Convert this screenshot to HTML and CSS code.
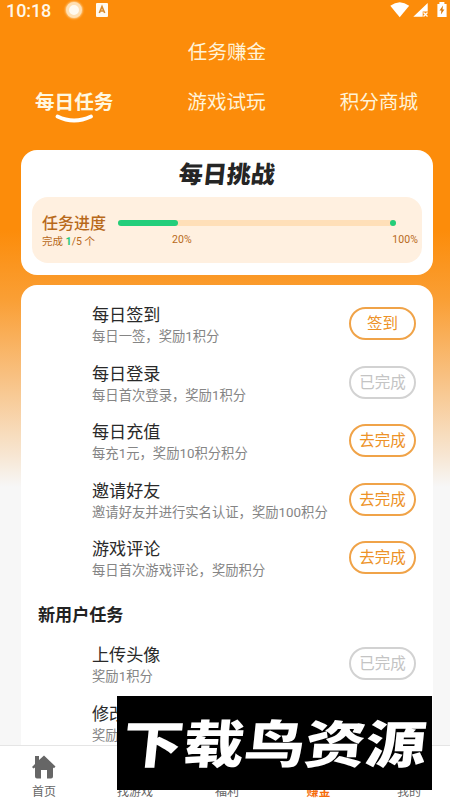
FILE: index.html
```html
<!DOCTYPE html>
<html lang="zh-CN">
<head>
<meta charset="utf-8">
<title>任务赚金</title>
<link rel="stylesheet" href="styles.css">
</head>
<body>
<div class="app">
  <header class="status">
    <span class="clock">10:18</span>
    <span class="rec"></span>
    <svg class="ime" width="12" height="14" viewBox="0 0 12 14"><rect width="12" height="14" rx="1" fill="#fffaf0"/><path d="M3.3 10 6 3.6 8.7 10M4.2 8h3.6" fill="none" stroke="#d98a2b" stroke-width="1.6"/></svg>
    <svg class="signals" width="58" height="18" viewBox="0 0 58 18">
      <path d="M.3 4.8Q9.7-2.2 19.2 4.8L9.7 16.3Z" fill="#fff"/>
      <path d="M37.7 2v8.5h-5v5.3h-9.4Z" fill="#fff"/>
      <path d="m33.5 11.5 4 4m0-4-4 4" stroke="#fff" stroke-width="1.3"/>
      <path d="M47.4 3h2V1h5v2h2.2v13h-9.2Z" fill="#fff"/>
      <path d="m53 4.4-3.5 5h1.9l-.5 4 3.5-5h-1.9Z" fill="#d9790c"/>
    </svg>
  </header>
  <h1 class="page-title">任务赚金</h1>
  <nav class="tabs">
    <span class="tab active">每日任务<svg class="smile" width="40" height="10" viewBox="0 0 40 10"><path d="M2.5 2.5Q19 10.5 36 2.5" fill="none" stroke="#fff" stroke-width="3.8" stroke-linecap="round"/></svg></span>
    <span class="tab">游戏试玩</span>
    <span class="tab">积分商城</span>
  </nav>
  <section class="card challenge">
    <h2>每日挑战</h2>
    <div class="progress">
      <div class="summary"><strong>任务进度</strong><span>完成 <b>1</b>/5 个</span></div>
      <div class="meter">
        <div class="track"><i class="fill"></i><i class="end"></i></div>
        <div class="marks"><span>20%</span><span>100%</span></div>
      </div>
    </div>
  </section>
  <section class="card tasks">
    <div class="task"><div><h3>每日签到</h3><p>每日一签，奖励1积分</p></div><button>签到</button></div>
    <div class="task"><div><h3>每日登录</h3><p>每日首次登录，奖励1积分</p></div><button class="done">已完成</button></div>
    <div class="task"><div><h3>每日充值</h3><p>每充1元，奖励10积分积分</p></div><button>去完成</button></div>
    <div class="task"><div><h3>邀请好友</h3><p>邀请好友并进行实名认证，奖励100积分</p></div><button>去完成</button></div>
    <div class="task"><div><h3>游戏评论</h3><p>每日首次游戏评论，奖励积分</p></div><button>去完成</button></div>
    <h4>新用户任务</h4>
    <div class="task"><div><h3>上传头像</h3><p>奖励1积分</p></div><button class="done">已完成</button></div>
    <div class="task"><div><h3>修改昵称</h3><p>奖励1积分</p></div></div>
  </section>
  <nav class="bottom">
    <span class="item"><svg width="24" height="24" viewBox="0 0 24 24"><path d="M0 12 3 9V1h4v4l5-4.5 11.5 11-1.5 1.7-1-.7v9q0 2-2 2h-4v-8.5H9v8.5H5q-2 0-2-2v-9l-1.5 1Z" fill="#666"/></svg>首页</span>
    <span class="item">找游戏</span>
    <span class="item">福利</span>
    <span class="item current">赚金</span>
    <span class="item">我的</span>
  </nav>
  <div class="banner"><span>下载鸟资源</span></div>
</div>
</body>
</html>
```

FILE: styles.css
```css
* { box-sizing: border-box; margin: 0; padding: 0; }
body { font-family: Roboto, "Noto Sans CJK SC", sans-serif; }
.app {
  position: relative;
  width: 450px;
  height: 800px;
  overflow: hidden;
  display: flex;
  flex-direction: column;
  background: linear-gradient(#fc8c0a 0, #fc8c0a 230px, #fa9f35 300px, #f8c080 375px, #f7e6d2 455px, #f7f7f7 487px);
}
.status { height: 22px; flex: none; display: flex; align-items: center; padding: 0 2px 2px 6px; color: #fff8e8; }
.clock { font-size: 18px; width: 60px; letter-spacing: -.1px; font-weight: 500; }
.rec { width: 16px; height: 16px; border-radius: 50%; border: 3px solid #ffe0b4; background: #fffaf0; box-shadow: 0 0 2px 1px #ffc57b; }
.ime { margin-left: 14px; }
.signals { margin-left: auto; }
.page-title { height: 58px; flex: none; line-height: 61px; text-align: center; font-size: 19.6px; font-weight: 400; color: #fff3d8; padding-left: 4px; }
.tabs { display: flex; justify-content: space-between; height: 70px; flex: none; padding: 8px 32px 0 35px; font-size: 19.6px; line-height: 30px; color: #fff3d8; }
.tab { position: relative; }
.active { font-weight: 700; color: #fff8e0; }
.smile { position: absolute; left: 20px; top: 26px; }
.card { margin: 0 17px 0 21px; background: #fff; border-radius: 16px; flex: none; }
.challenge { height: 125px; padding: 0 11px; }
.challenge h2 { height: 47px; line-height: 50px; text-align: center; font-size: 24px; font-weight: 900; color: #252525; transform: skewX(-6deg); }
.progress { height: 66px; border-radius: 16px; background: #fff0e0; display: flex; padding: 15px 3px 0 10px; color: #b8691a; }
.summary { width: 76px; display: flex; flex-direction: column; }
.summary strong { font-size: 16px; line-height: 22px; font-weight: 500; white-space: nowrap; padding-top: 1px; }
.summary span { font-size: 10.5px; line-height: 13px; }
.summary b { color: #27c778; font-weight: 700; }
.meter { flex: 1; }
.track { height: 6px; width: 278px; margin-top: 8px; border-radius: 3px; background: #ffdfb8; display: flex; justify-content: space-between; }
.fill { width: 60px; border-radius: 3px; background: #23ce7b; }
.end { width: 6px; border-radius: 50%; background: #23ce7b; }
.marks { display: flex; justify-content: space-between; padding: 8px 1px 0 54px; font-size: 10.5px; line-height: 12px; letter-spacing: .1px; }
.tasks { margin-top: 10px; height: 530px; padding: 9px 17px 0 17px; }
.task { height: 58.6px; padding-left: 54px; display: flex; justify-content: space-between; align-items: flex-start; }
.task h3 { font-size: 17.1px; line-height: 23px; margin-top: 10px; font-weight: 400; color: #292929; }
.task p { font-size: 13.33px; line-height: 19px; color: #858585; white-space: nowrap; }
.task button { width: 67px; height: 33px; margin: 13px 0 0; border: 2px solid #f0a348; border-radius: 17px; background: #fff; color: #ed9227; font: 15.5px/29px Roboto, "Noto Sans CJK SC", sans-serif; padding-top: 1px; }
.task .done { border-color: #d2d2d2; color: #c4c4c4; }
.tasks h4 { height: 47.5px; line-height: 56px; font-size: 17.1px; font-weight: 700; color: #222; }
.bottom { position: absolute; left: 0; right: 0; bottom: 0; height: 55px; border-top: 1px solid #e5e5e5; background: #fff; display: grid; grid-template-columns: 88px 94px 90px 93px 88px; }
.item { display: flex; flex-direction: column; justify-content: flex-end; align-items: center; font-size: 12px; line-height: 16px; color: #666; gap: 5px; }
.current { color: #f56b0a; font-weight: 700; }
.banner { position: absolute; left: 117px; top: 696px; width: 315px; height: 94px; background: #000; color: #fff; display: flex; align-items: center; justify-content: center; }
.banner span { font-size: 51px; line-height: 94px; font-weight: 900; white-space: nowrap; transform: translateY(3px) scaleX(1.19) skewX(-5deg); }
```
